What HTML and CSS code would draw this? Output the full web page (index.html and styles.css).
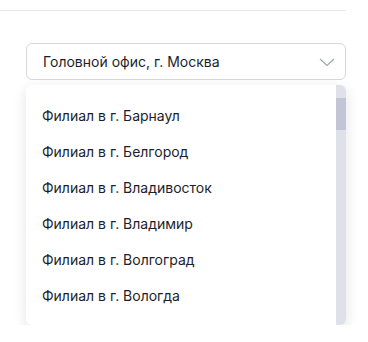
FILE: index.html
```html
<!DOCTYPE html>
<html lang="ru">
<head>
  <meta charset="UTF-8">
  <title>Выбор филиала</title>
  <link rel="stylesheet" href="styles.css">
</head>
<body>
  <div class="top-bar"></div>

  <div class="field">
    <div class="select">
      <span class="select-value">Головной офис, г. Москва</span>
      <svg class="chevron" width="16" height="9" viewBox="0 0 16 9">
        <path d="M1 1 L8 7.5 L15 1" fill="none" stroke="#a2a5b7" stroke-width="1.2"/>
      </svg>
    </div>

    <div class="dropdown">
      <ul class="options">
        <li class="option">Филиал в г. Барнаул</li>
        <li class="option">Филиал в г. Белгород</li>
        <li class="option">Филиал в г. Владивосток</li>
        <li class="option">Филиал в г. Владимир</li>
        <li class="option">Филиал в г. Волгоград</li>
        <li class="option">Филиал в г. Вологда</li>
      </ul>
      <div class="scroll-track">
        <div class="scroll-thumb"></div>
      </div>
    </div>
  </div>
</body>
</html>
```

FILE: styles.css
```css
body {
  margin: 0;
  background: #fff;
  font-family: Inter, "Noto Sans", sans-serif;
  color: #1d1e2c;
}
.top-bar {
  width: 346px;
  height: 10px;
  border-bottom: 1px solid #e7e7eb;
}
.field {
  width: 320px;
  margin: 32px 0 0 26px;
}
.select {
  display: flex;
  align-items: center;
  justify-content: space-between;
  height: 35px;
  padding: 0 10px 0 16px;
  border: 1px solid #d6d7df;
  border-radius: 6px;
  font-size: 14px;
}
.chevron {
  display: block;
  margin-top: 1px;
}
.dropdown {
  display: flex;
  height: 240px;
  margin-top: 5px;
  background: #fff;
  border-radius: 6px;
  box-shadow: 0 4px 14px rgba(20, 22, 40, 0.12);
  overflow: hidden;
}
.options {
  flex: 1;
  list-style: none;
  margin: 0;
  padding: 12px 0 0;
}
.option {
  display: flex;
  align-items: center;
  height: 36px;
  padding-left: 16px;
  font-size: 14px;
}
.scroll-track {
  width: 10px;
  background: #dfe1ea;
}
.scroll-thumb {
  height: 32px;
  margin-top: 13px;
  background: #c1c5d5;
}
```
